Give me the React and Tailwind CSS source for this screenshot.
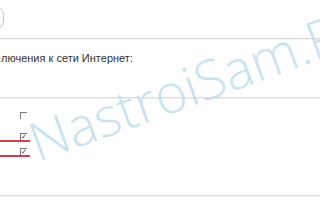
import React from "react";

function Check({ checked, marked }) {
  return (
    <div className="flex flex-col">
      <div className="pl-[20px]">
        <span className="flex h-[7px] w-[7px] items-start justify-start border-l border-t border-[#777] text-[7px] leading-[6px] text-[#333]">
          {checked ? "✓" : ""}
        </span>
      </div>
      {marked && <div className="h-[2px] w-[30px] bg-[#d04050]" />}
    </div>
  );
}

export default function App() {
  return (
    <div className="relative flex h-[200px] w-[320px] flex-col overflow-hidden bg-white font-['Liberation_Sans',sans-serif] text-[#333]">
      {/* кусок кнопки сверху */}
      <div className="h-[38px] pt-[5px]">
        <div className="-ml-[20px] h-[26px] w-[24px] rounded-r-[10px] border border-[#c8c8c8] bg-white" />
      </div>
      <div className="h-[2px] border-t border-[#dcdcdc] bg-[#f0f0f0]" />

      <div className="h-[57px] pl-[1px] pt-[12px] text-[11px] leading-[13px]">
        лючения к сети Интернет:
      </div>
      <div className="h-[2px] border-t border-[#dcdcdc] bg-[#f3f3f3]" />

      <div className="flex flex-col gap-[14px] pt-[13px]">
        <Check />
        <div className="flex flex-col gap-[6px]">
          <Check checked marked />
          <Check checked marked />
        </div>
      </div>

      <div className="mb-[3px] mt-auto h-[2px] border-t border-[#dcdcdc] bg-[#eeeeee]" />

      {/* водяной знак */}
      <div className="pointer-events-none absolute left-[40px] top-[114px] origin-bottom-left -rotate-[20deg] whitespace-nowrap font-['Open_Sans',sans-serif] text-[54px] font-light leading-[54px] text-[#b4dcef] opacity-75">
        NastroiSam.Ru
      </div>
    </div>
  );
}
